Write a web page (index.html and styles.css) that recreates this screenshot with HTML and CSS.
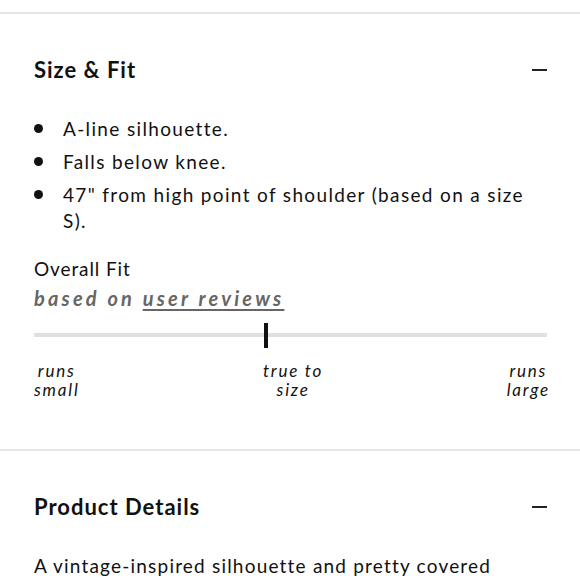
FILE: index.html
```html
<!DOCTYPE html>
<html lang="en">
<head>
<meta charset="utf-8">
<title>Size &amp; Fit</title>
<link rel="stylesheet" href="styles.css">
</head>
<body>
<div class="page">
  <section class="panel">
    <div class="panel-head">
      <h2 class="panel-title">Size &amp; Fit</h2>
      <span class="toggle" aria-hidden="true"></span>
    </div>
    <ul class="fit-list">
      <li>A-line silhouette.</li>
      <li>Falls below knee.</li>
      <li>47" from high point of shoulder (based on a size S).</li>
    </ul>
    <div class="overall">
      <div class="overall-title">Overall Fit</div>
      <div class="overall-sub">based on <a href="#" class="reviews-link">user reviews</a></div>
      <div class="scale">
        <div class="track"></div>
        <div class="marker"></div>
      </div>
      <div class="scale-labels">
        <span class="lbl">runs<br>small</span>
        <span class="lbl">true to<br>size</span>
        <span class="lbl lbl-end">runs<br>large</span>
      </div>
    </div>
  </section>
  <section class="panel panel-second">
    <div class="panel-head">
      <h2 class="panel-title">Product Details</h2>
      <span class="toggle" aria-hidden="true"></span>
    </div>
    <p class="details">A vintage-inspired silhouette and pretty covered buttons.</p>
  </section>
</div>
</body>
</html>
```
FILE: styles.css
```css
html, body {
  margin: 0;
  padding: 0;
  background: #fff;
}
body {
  font-family: Lato, "Noto Sans", sans-serif;
  color: #111;
  overflow: hidden;
}
.page {
  padding-top: 12px;
}
.panel {
  border-top: 2px solid #e6e6e6;
  padding: 0 33px 0 34px;
}
.panel-head {
  display: flex;
  justify-content: space-between;
  align-items: center;
  height: 30px;
  margin-top: 41px;
}
.panel-title {
  margin: 0;
  font-size: 22px;
  font-weight: 700;
  line-height: 30px;
  letter-spacing: 1px;
}
.toggle {
  display: block;
  width: 15px;
  height: 2px;
  background: #222;
}
.fit-list {
  list-style: none;
  margin: 31px 0 0;
  padding: 0;
  font-size: 19px;
  line-height: 26px;
  letter-spacing: 1.35px;
}
.fit-list li {
  position: relative;
  padding-left: 29px;
  margin-bottom: 7px;
}
.fit-list li::before {
  content: "";
  position: absolute;
  left: 0;
  top: 8px;
  width: 9px;
  height: 9px;
  border-radius: 50%;
  background: #111;
}
.overall {
  margin-top: 22px;
}
.overall-title {
  font-size: 19px;
  line-height: 26px;
  letter-spacing: 0.9px;
}
.overall-sub {
  font-size: 20px;
  line-height: 32px;
  font-weight: 700;
  font-style: italic;
  color: #666;
  letter-spacing: 3.2px;
}
.reviews-link {
  color: #666;
  text-decoration: underline;
  text-decoration-thickness: 2px;
  text-underline-offset: 3px;
}
.scale {
  position: relative;
  height: 25px;
  margin-top: 9px;
}
.track {
  position: absolute;
  left: 0;
  right: 0;
  top: 10px;
  height: 4px;
  background: #e0e0e0;
}
.marker {
  position: absolute;
  left: 230px;
  top: 0;
  width: 4px;
  height: 25px;
  background: #111;
}
.scale-labels {
  display: flex;
  justify-content: space-between;
  margin-top: 13px;
  font-size: 17px;
  line-height: 19px;
  font-style: italic;
  letter-spacing: 1.8px;
}
.lbl {
  text-align: center;
}
.lbl-end {
  margin-right: -3px;
}
.panel-second {
  margin-top: 50px;
}
.details {
  margin: 30px 0 0;
  font-size: 19px;
  line-height: 28px;
  letter-spacing: 1.2px;
}
```
